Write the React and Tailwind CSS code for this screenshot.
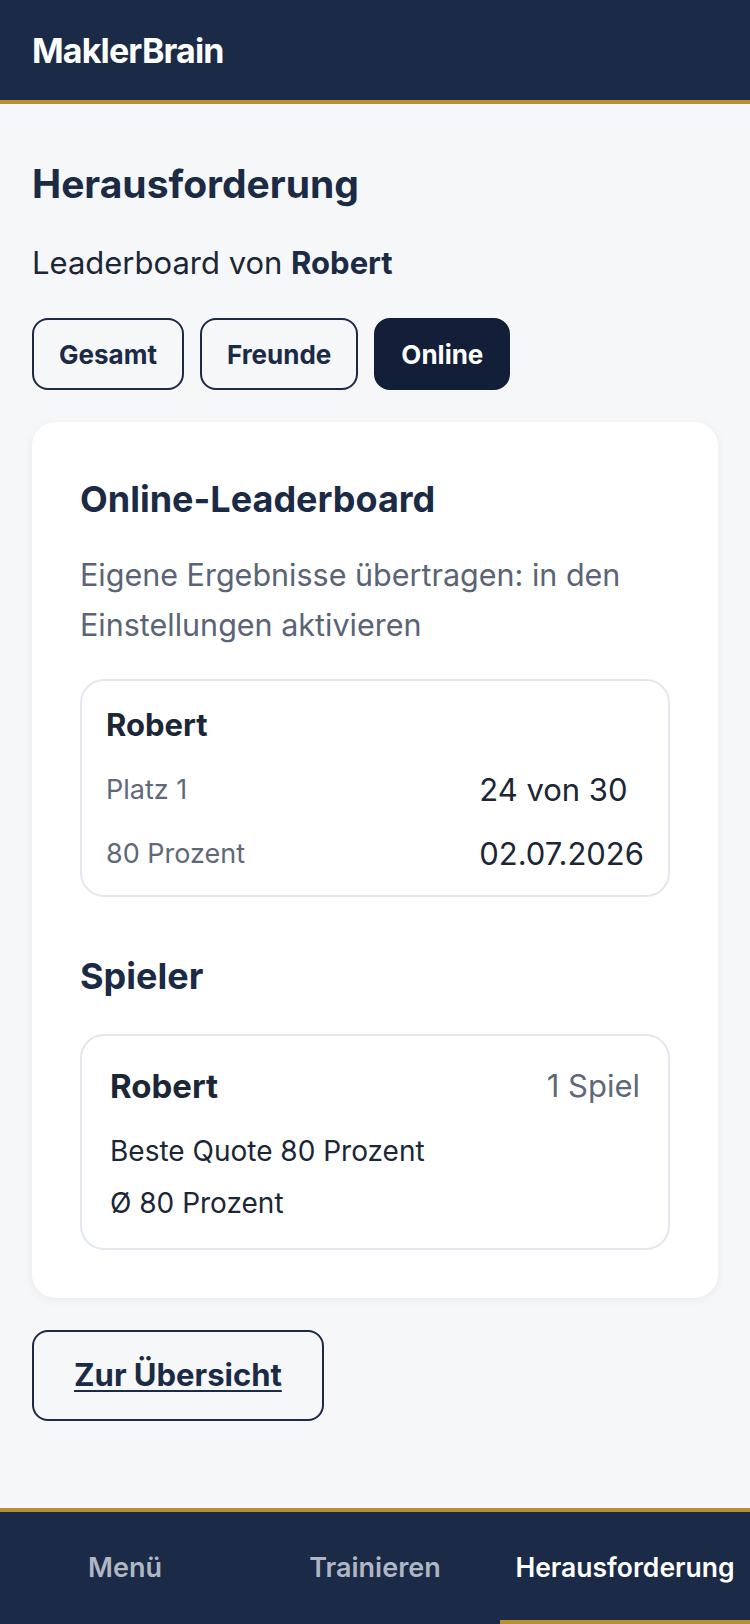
import React, { useState } from "react";

const tabs = ["Gesamt", "Freunde", "Online"];

const App = () => {
  const [tab, setTab] = useState("Online");

  return (
    <div
      className="flex flex-col min-h-screen bg-[#f6f7f9] text-[#1b2a45]"
      style={{ fontFamily: "Inter, 'Noto Sans', sans-serif" }}
    >
      {/* HEADER */}
      <header className="h-[104px] bg-[#1b2a47] border-b-4 border-[#b98f35] flex items-center px-8">
        <span className="text-white text-[34px] font-bold tracking-tight">MaklerBrain</span>
      </header>

      {/* CONTENT */}
      <main className="flex-1 px-8 pt-[56px]">
        <h1 className="text-[39px] leading-[48px] font-bold">Herausforderung</h1>

        <p className="mt-[35px] text-[31px] leading-[40px] text-[#1b2636]">
          Leaderboard von <span className="font-bold text-[#1b2a45]">Robert</span>
        </p>

        <div className="flex gap-4 mt-[35px]">
          {tabs.map((t) => (
            <button
              key={t}
              onClick={() => setTab(t)}
              className={
                t === tab
                  ? "h-[72px] px-[25px] rounded-2xl border-2 border-[#131f38] bg-[#131f38] text-white text-[26px] font-bold"
                  : "h-[72px] px-[25px] rounded-2xl border-2 border-[#1b2a45] text-[#1b2a45] text-[26px] font-bold"
              }
            >
              {t}
            </button>
          ))}
        </div>

        {/* LEADERBOARD CARD */}
        <section className="mt-8 bg-white rounded-3xl px-12 pt-[55px] pb-12 shadow-[0_2px_10px_rgba(15,23,42,0.06)]">
          <h2 className="text-[36px] leading-[44px] font-bold">Online-Leaderboard</h2>
          <p className="mt-[29px] text-[30.5px] leading-[50px] text-[#5a6476]">
            Eigene Ergebnisse übertragen: in den Einstellungen aktivieren
          </p>

          <div className="mt-[29px] border-2 border-[#e3e7ee] rounded-3xl px-6 pt-6 pb-[21px]">
            <div className="text-[31px] leading-[40px] font-bold text-[#1b2636]">Robert</div>
            <div className="mt-[25px] grid grid-cols-[1fr_auto] gap-y-[24px] items-center">
              <span className="text-[27px] leading-[40px] text-[#5f6878]">Platz 1</span>
              <span className="text-[31px] leading-[40px] text-[#1b2636]">24 von 30</span>
              <span className="text-[27px] leading-[40px] text-[#5f6878]">80 Prozent</span>
              <span className="text-[31px] leading-[40px] text-[#1b2636]">02.07.2026</span>
            </div>
          </div>

          <h2 className="mt-[57px] text-[36px] leading-[44px] font-bold">Spieler</h2>

          <div className="mt-[36px] border-2 border-[#e3e7ee] rounded-3xl px-7 pt-[30px] pb-[19px]">
            <div className="flex justify-between items-center">
              <span className="text-[33px] leading-[40px] font-bold text-[#1b2636]">Robert</span>
              <span className="text-[31px] leading-[40px] text-[#5f6878]">1 Spiel</span>
            </div>
            <div className="mt-[19px] text-[28px] leading-[52px] text-[#1b2636]">
              <div>Beste Quote 80 Prozent</div>
              <div>Ø 80 Prozent</div>
            </div>
          </div>
        </section>

        <button className="mt-8 h-[91px] px-10 rounded-2xl border-2 border-[#1b2a45] text-[31px] font-bold underline underline-offset-4 decoration-2">
          Zur Übersicht
        </button>
      </main>

      {/* BOTTOM NAV */}
      <nav className="h-[116px] bg-[#1b2a47] border-t-4 border-[#b98f35] grid grid-cols-3">
        <a className="flex items-center justify-center text-[27px] font-semibold text-[#b0b6c3]">Menü</a>
        <a className="flex items-center justify-center text-[27px] font-semibold text-[#b0b6c3]">Trainieren</a>
        <a className="flex items-center justify-center text-[26.5px] font-semibold text-white border-b-4 border-[#b98f35] pt-1">
          Herausforderung
        </a>
      </nav>
    </div>
  );
};

export default App;
